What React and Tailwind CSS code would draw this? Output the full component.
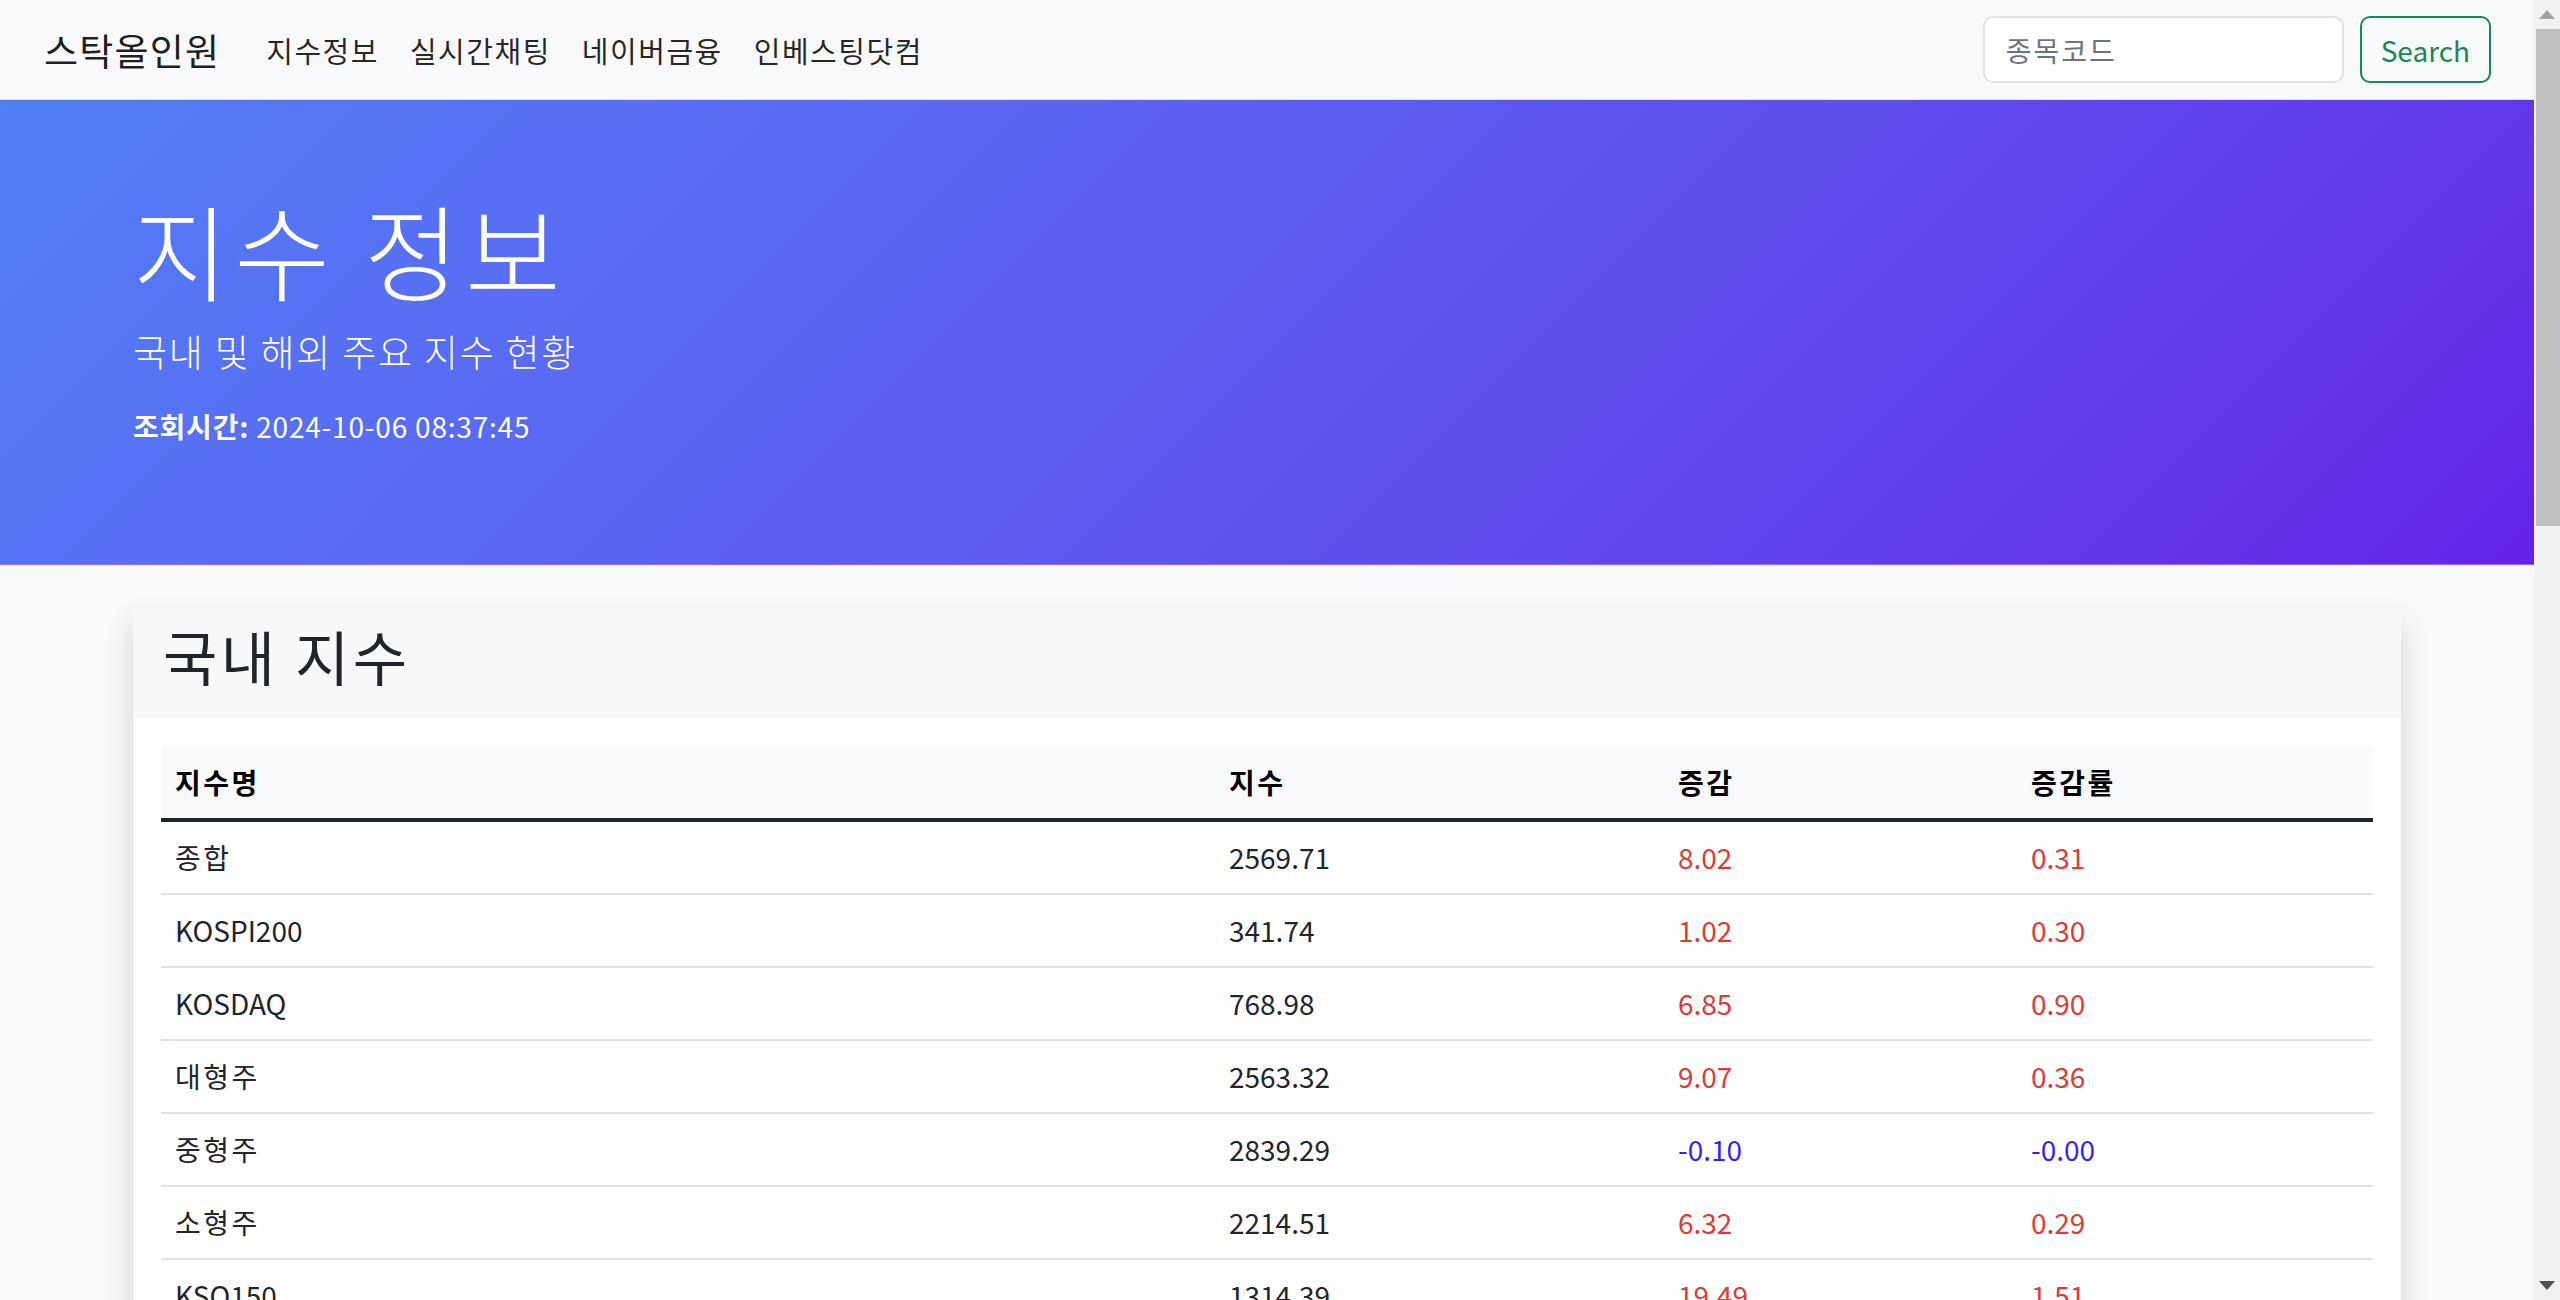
import React from "react";

// 국내 지수 데이터
const domesticIndices = [
	{ name: "종합", value: "2569.71", change: "8.02", rate: "0.31" },
	{ name: "KOSPI200", value: "341.74", change: "1.02", rate: "0.30" },
	{ name: "KOSDAQ", value: "768.98", change: "6.85", rate: "0.90" },
	{ name: "대형주", value: "2563.32", change: "9.07", rate: "0.36" },
	{ name: "중형주", value: "2839.29", change: "-0.10", rate: "-0.00" },
	{ name: "소형주", value: "2214.51", change: "6.32", rate: "0.29" },
	{ name: "KSQ150", value: "1314.39", change: "19.49", rate: "1.51" },
	{ name: "KRX100", value: "5621.08", change: "15.77", rate: "0.28" },
	{ name: "코스닥150", value: "1314.39", change: "19.49", rate: "1.51" },
];

const navLinks = ["지수정보", "실시간채팅", "네이버금융", "인베스팅닷컴"];

const changeColor = (v) =>
	v.startsWith("-") ? "text-[#3a1ff2]" : "text-[#e03a36]";

// 한글 이름은 자간을 조금 넓혀 준다
const nameTracking = (name) =>
	/[가-힣]/.test(name) ? "tracking-[2.5px]" : "tracking-normal";

const App = () => {
	return (
		<div className="flex h-screen w-full overflow-hidden bg-[#f8f9fa] font-['Noto_Sans_CJK_KR','Noto_Sans',sans-serif] text-[#212529]">
			<div className="min-w-0 flex-1 overflow-hidden">
				{/* Navbar */}
				<nav className="flex h-[100px] items-center justify-between border-b border-[#dcdfe4] bg-[#f8f9fa] pl-[44px] pr-[43px]">
					<div className="flex items-center">
						<a className="mr-[46px] text-[37px] leading-[52px] tracking-[1.2px] text-black/90">
							스탁올인원
						</a>
						<ul className="flex items-center gap-[31px]">
							{navLinks.map((link) => (
								<li key={link}>
									<a className="text-[29px] leading-[42px] tracking-[1.5px] text-black/85">
										{link}
									</a>
								</li>
							))}
						</ul>
					</div>
					<form className="flex items-center gap-[16px]">
						<input
							type="search"
							placeholder="종목코드"
							className="h-[67px] w-[361px] rounded-[10px] border-2 border-[#dee2e6] bg-white px-[21px] text-[28px] text-[#212529] placeholder:tracking-[2px] placeholder:text-[#6c757d] focus:outline-none"
						/>
						<button
							type="button"
							className="h-[67px] rounded-[10px] border-2 border-[#198754] px-[19px] text-[28px] text-[#198754]"
						>
							Search
						</button>
					</form>
				</nav>

				{/* Hero */}
				<header className="h-[465px] border-b border-[#8f6cf6] bg-linear-135 from-[#527ef6] to-[#6322e8] pt-[88px] text-white">
					<div className="mx-auto max-w-[2310px] px-[21px]">
						<h1 className="mb-[16px] text-[104px] font-light leading-[121px] tracking-[5.5px]">
							지수 정보
						</h1>
						<p className="mb-[28px] text-[37px] font-light leading-[52px] tracking-[1.8px]">
							국내 및 해외 주요 지수 현황
						</p>
						<p className="text-[28px] leading-[42px] tracking-[0.8px]">
							<strong className="font-bold">조회시간:</strong> 2024-10-06 08:37:45
						</p>
					</div>
				</header>

				{/* 국내 지수 */}
				<main className="mx-auto mt-[43px] max-w-[2310px] px-[21px]">
					<div className="overflow-hidden rounded-[7px] bg-white shadow-[0_14px_28px_rgba(0,0,0,0.15)]">
						<div className="bg-[#f7f8f9] px-[30px] pt-[14px] pb-[16px]">
							<h2 className="mb-[14px] text-[59px] font-normal leading-[67px] tracking-[3.4px] text-[#212529]">
								국내 지수
							</h2>
						</div>
						<div className="p-[28px]">
							<table className="w-full table-fixed border-collapse text-left text-[28px]">
								<thead>
									<tr className="bg-[#f8f9fa]">
										<th className="w-[1054px] border-b-4 border-[#212529] px-[14px] py-[14px] font-bold leading-[43px] tracking-[2.5px] text-black">
											지수명
										</th>
										<th className="w-[449px] border-b-4 border-[#212529] px-[14px] py-[14px] font-bold leading-[43px] tracking-[2.5px] text-black">
											지수
										</th>
										<th className="w-[353px] border-b-4 border-[#212529] px-[14px] py-[14px] font-bold leading-[43px] tracking-[2.5px] text-black">
											증감
										</th>
										<th className="border-b-4 border-[#212529] px-[14px] py-[14px] font-bold leading-[43px] tracking-[2.5px] text-black">
											증감률
										</th>
									</tr>
								</thead>
								<tbody>
									{domesticIndices.map((row, index) => (
										<tr key={index}>
											<td
												className={`border-b-2 border-[#dee2e6] px-[14px] py-[14px] leading-[43px] ${nameTracking(row.name)}`}
											>
												{row.name}
											</td>
											<td className="border-b-2 border-[#dee2e6] px-[14px] py-[14px] leading-[43px]">
												{row.value}
											</td>
											<td
												className={`border-b-2 border-[#dee2e6] px-[14px] py-[14px] leading-[43px] ${changeColor(row.change)}`}
											>
												{row.change}
											</td>
											<td
												className={`border-b-2 border-[#dee2e6] px-[14px] py-[14px] leading-[43px] ${changeColor(row.rate)}`}
											>
												{row.rate}
											</td>
										</tr>
									))}
								</tbody>
							</table>
						</div>
					</div>
				</main>
			</div>

			{/* Scrollbar */}
			<div className="flex w-[26px] shrink-0 flex-col bg-[#f1f1f1]">
				<div className="flex h-[29px] items-center justify-center">
					<svg width="16" height="9" viewBox="0 0 16 9">
						<path d="M8 0 L16 9 L0 9 Z" fill="#a3a3a3" />
					</svg>
				</div>
				<div className="ml-[2px] h-[497px] bg-[#c1c1c1]" />
				<div className="flex-1" />
				<div className="flex h-[29px] items-center justify-center">
					<svg width="16" height="9" viewBox="0 0 16 9">
						<path d="M0 0 L16 0 L8 9 Z" fill="#505050" />
					</svg>
				</div>
			</div>
		</div>
	);
};

export default App;
